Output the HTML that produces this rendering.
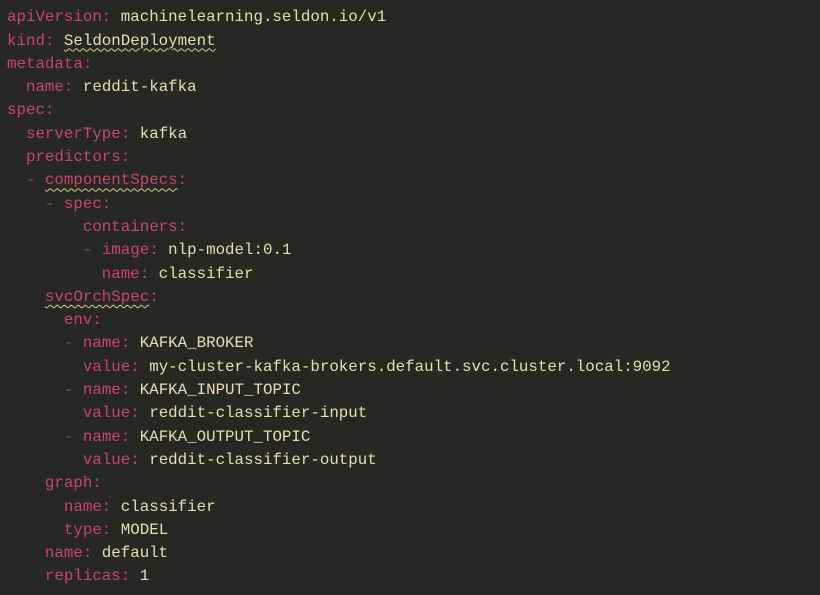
<!DOCTYPE html>
<html><head><style>
html,body{margin:0;background:#272822;width:820px;height:595px;overflow:hidden}
pre{margin:0;padding:6.3px 0 0 7px;font-family:"Liberation Mono",monospace;font-size:15.8px;line-height:23.29px;color:#e6dfb4}
.k{color:#c8456d}.d{color:#a83c5c}
.w{text-decoration:underline wavy #d6cc96;text-decoration-thickness:1px;text-underline-offset:3px}
</style></head><body><pre><span class="k">apiVersion:</span> machinelearning.seldon.io/v1
<span class="k">kind:</span> <span class="w">SeldonDeployment</span>
<span class="k">metadata:</span>
  <span class="k">name:</span> reddit-kafka
<span class="k">spec:</span>
  <span class="k">serverType:</span> kafka
  <span class="k">predictors:</span>
  <span class="d">-</span> <span class="k w">componentSpecs</span><span class="k">:</span>
    <span class="d">-</span> <span class="k">spec:</span>
        <span class="k">containers:</span>
        <span class="d">-</span> <span class="k">image:</span> nlp-model:0.1
          <span class="k">name:</span> classifier
    <span class="k w">svcOrchSpec</span><span class="k">:</span>
      <span class="k">env:</span>
      <span class="d">-</span> <span class="k">name:</span> KAFKA_BROKER
        <span class="k">value:</span> my-cluster-kafka-brokers.default.svc.cluster.local:9092
      <span class="d">-</span> <span class="k">name:</span> KAFKA_INPUT_TOPIC
        <span class="k">value:</span> reddit-classifier-input
      <span class="d">-</span> <span class="k">name:</span> KAFKA_OUTPUT_TOPIC
        <span class="k">value:</span> reddit-classifier-output
    <span class="k">graph:</span>
      <span class="k">name:</span> classifier
      <span class="k">type:</span> MODEL
    <span class="k">name:</span> default
    <span class="k">replicas:</span> 1
</pre></body></html>
